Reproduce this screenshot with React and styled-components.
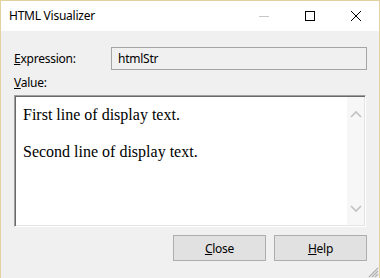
import styled, { createGlobalStyle } from "styled-components";

const GlobalStyle = createGlobalStyle`
    html, body {
        margin: 0;
        padding: 0;
        background: #f0f0f0;
    }
    * {
        box-sizing: border-box;
    }
`

const Window = styled.div`
    position: relative;
    width: 380px;
    height: 278px;
    display: flex;
    flex-direction: column;
    background: #f0f0f0;
    border: 1px solid #e2d2a0;
    border-bottom: none;
    font-family: "Noto Sans", "Open Sans", sans-serif;
    font-size: 12px;
    letter-spacing: -0.25px;
    color: #000;
    overflow: hidden;
`

const TitleBar = styled.div`
    height: 30px;
    display: flex;
    align-items: center;
    background: #fff;
    padding-left: 8px;
`

const Title = styled.div`
    flex: 1;
    font-size: 12px;
    line-height: 16px;
`

const Controls = styled.div`
    display: flex;
    height: 100%;
`

const CtlButton = styled.div`
    width: 46px;
    height: 100%;
    display: flex;
    align-items: center;
    justify-content: center;
`

const Body = styled.div`
    flex: 1;
    display: flex;
    flex-direction: column;
    padding: 16px 13px 0 13px;
`

const FieldRow = styled.div`
    display: flex;
    align-items: center;
`

const Label = styled.div`
    width: 97px;
    line-height: 16px;
`

const Key = styled.span`
    text-decoration: underline;
    text-underline-offset: 1px;
`

const ReadOnlyBox = styled.div`
    flex: 1;
    height: 23px;
    margin-right: -1px;
    border: 1px solid #a5a5a5;
    background: #f0f0f0;
    padding: 0 6px;
    display: flex;
    align-items: center;
`

const ValueLabel = styled.div`
    line-height: 16px;
    margin-top: 5px;
`

const ValuePane = styled.div`
    margin-top: 4px;
    height: 132px;
    display: flex;
    background: #fff;
    border: 1px solid;
    border-color: #a0a0a0 #ffffff #ffffff #a0a0a0;
    box-shadow: inset 1px 1px 0 #696969, inset -1px -1px 0 #e3e3e3;
`

const ValueText = styled.div`
    flex: 1;
    padding: 9px 7px 0 8px;
    font-family: "Liberation Serif", "Times New Roman", serif;
    font-size: 16px;
    line-height: 20px;
    letter-spacing: 0;
`

const Para = styled.p`
    margin: 0 0 17px 0;
`

const ScrollBar = styled.div`
    width: 17px;
    margin: 1px 1px 1px 0;
    background: #f7f7f7;
    display: flex;
    flex-direction: column;
    justify-content: space-between;
    align-items: center;
    padding: 13px 0 12px 0;
`

const ButtonRow = styled.div`
    display: flex;
    justify-content: flex-end;
    gap: 8px;
    margin-top: 8px;
    margin-right: -1px;
`

const Button = styled.div`
    width: 93px;
    height: 26px;
    display: flex;
    align-items: center;
    justify-content: center;
    background: #e1e1e1;
    border: 1px solid #adadad;
    font-size: 12px;
`

const Grip = styled.svg`
    position: absolute;
    right: 0;
    bottom: 0;
`

const Chevron = ({ up }) => (
    <svg width="12" height="8" viewBox="0 0 12 8">
        <path
            d={up ? "M1 7 L6 2 L11 7" : "M1 1 L6 6 L11 1"}
            fill="none"
            stroke="#c1c1c1"
            strokeWidth="1.6"
        />
    </svg>
);

const App = () => {
    return (
        <Window>
            <GlobalStyle />
            <TitleBar>
                <Title>HTML Visualizer</Title>
                <Controls>
                    <CtlButton>
                        <svg width="10" height="10" viewBox="0 0 10 10">
                            <path d="M0 5.5 H10" stroke="#c8c8c8" strokeWidth="1" />
                        </svg>
                    </CtlButton>
                    <CtlButton>
                        <svg width="10" height="10" viewBox="0 0 10 10">
                            <rect x="0.5" y="0.5" width="9" height="9" fill="none" stroke="#000" strokeWidth="1" />
                        </svg>
                    </CtlButton>
                    <CtlButton>
                        <svg width="10" height="10" viewBox="0 0 10 10">
                            <path d="M0 0 L10 10 M10 0 L0 10" stroke="#000" strokeWidth="1" />
                        </svg>
                    </CtlButton>
                </Controls>
            </TitleBar>
            <Body>
                <FieldRow>
                    <Label><Key>E</Key>xpression:</Label>
                    <ReadOnlyBox>htmlStr</ReadOnlyBox>
                </FieldRow>
                <ValueLabel><Key>V</Key>alue:</ValueLabel>
                <ValuePane>
                    <ValueText>
                        <Para>First line of display text.</Para>
                        <Para>Second line of display text.</Para>
                    </ValueText>
                    <ScrollBar>
                        <Chevron up />
                        <Chevron />
                    </ScrollBar>
                </ValuePane>
                <ButtonRow>
                    <Button><Key>C</Key>lose</Button>
                    <Button><Key>H</Key>elp</Button>
                </ButtonRow>
            </Body>
            <Grip width="12" height="12" viewBox="0 0 12 12">
                <path d="M11 2 L2 11 M11 5 L5 11 M11 8 L8 11" stroke="#b0b0b0" strokeWidth="1.2" />
            </Grip>
        </Window>
    );
}

export default App;
